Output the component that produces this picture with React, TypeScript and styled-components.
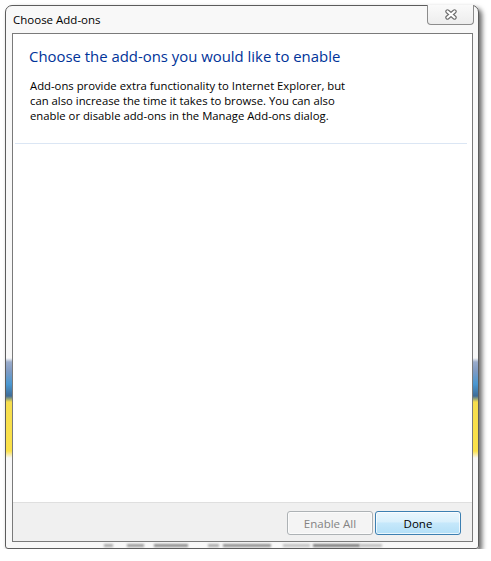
import React from 'react';
import styled, { createGlobalStyle } from 'styled-components';

const GlobalStyle = createGlobalStyle`
  html, body {
    margin: 0;
    padding: 0;
    background: #ffffff;
  }
  body {
    font-family: 'Open Sans', 'Noto Sans', 'Liberation Sans', sans-serif;
    color: #000;
  }
`;

type Smudge = { left: number; width: number; shade: string };

// blurred desktop showing through the glass frame below the panel
const smudges: Smudge[] = [
  { left: 92, width: 9, shade: '#a8a8a8' },
  { left: 14, width: 17, shade: '#9a9a9a' },
  { left: 10, width: 34, shade: '#8c8c8c' },
  { left: 20, width: 11, shade: '#a8a8a8' },
  { left: 4, width: 48, shade: '#8f8f8f' },
  { left: 12, width: 27, shade: '#c0c0c0' },
  { left: 3, width: 47, shade: '#7a7a7a' },
  { left: 0, width: 22, shade: '#bdbdbd' },
];

const App = () => {
  return (
    <>
      <GlobalStyle />
      <Page>
        <Window>
          <TitleBar>
            <Title>Choose Add-ons</Title>
            <CloseBtn>
              <svg width="14" height="11" viewBox="0 0 14 11">
                <path d="M3.5 2.5 L10.5 8.5 M10.5 2.5 L3.5 8.5" stroke="#6e6e6e" strokeWidth="4.4" strokeLinecap="round" />
                <path d="M3.5 2.5 L10.5 8.5 M10.5 2.5 L3.5 8.5" stroke="#ffffff" strokeWidth="2.2" strokeLinecap="round" />
              </svg>
            </CloseBtn>
          </TitleBar>
          <Panel>
            <Heading>Choose the add-ons you would like to enable</Heading>
            <Description>
              Add-ons provide extra functionality to Internet Explorer, but<br />
              can also increase the time it takes to browse. You can also<br />
              enable or disable add-ons in the Manage Add-ons dialog.
            </Description>
            <Separator />
            <ListArea />
            <Footer>
              <Button disabled>Enable All</Button>
              <Button $primary>Done</Button>
            </Footer>
          </Panel>
          <BottomFrame>
            {smudges.map((s, i) => (
              <Smear key={i} style={{ marginLeft: s.left, width: s.width, background: s.shade }} />
            ))}
          </BottomFrame>
        </Window>
      </Page>
    </>
  );
};

export default App;

const Page = styled.div`
  padding: 5px 0 0 5px;
`;

const Window = styled.div`
  box-sizing: border-box;
  width: 474px;
  height: 544px;
  display: flex;
  flex-direction: column;
  padding: 0 5px 0 6px;
  border: 1px solid #5c5c5c;
  border-radius: 7px 7px 3px 3px;
  box-shadow: 3px 3px 5px rgba(0, 0, 0, 0.6);
  background: linear-gradient(
    to bottom,
    #f8f8f8 0px,
    #f8f8f8 352px,
    #9aaccb 356px,
    #7f9bc4 365px,
    #4a98d2 378px,
    #3f6c98 390px,
    #f6de4e 396px,
    #fbe148 445px,
    #f8f8f8 452px,
    #f8f8f8 100%
  );
`;

const TitleBar = styled.div`
  height: 27px;
  display: flex;
  align-items: flex-start;
  justify-content: space-between;
`;

const Title = styled.span`
  margin: 6px 0 0 1px;
  font-size: 11.5px;
  line-height: 16px;
  color: #000;
`;

const CloseBtn = styled.div`
  box-sizing: border-box;
  width: 47px;
  height: 20px;
  margin: -1px -1px 0 0;
  display: flex;
  align-items: center;
  justify-content: center;
  border: 1px solid #8c8c8c;
  border-top: none;
  border-radius: 0 0 4px 4px;
  background: linear-gradient(to bottom, #fafafa, #ededed);
`;

const Panel = styled.div`
  flex: 1;
  display: flex;
  flex-direction: column;
  border: 1px solid #7a7a7a;
  background: #ffffff;
`;

const Heading = styled.h1`
  margin: 12px 0 0 16px;
  font-size: 14.9px;
  font-weight: 400;
  line-height: 21px;
  color: #003399;
`;

const Description = styled.p`
  margin: 11px 0 0 17px;
  font-size: 11.3px;
  line-height: 15px;
  color: #000;
`;

const Separator = styled.div`
  height: 1px;
  margin: 20px 5px 0 2px;
  background: #dbe6f4;
`;

const ListArea = styled.div`
  flex: 1;
`;

const Footer = styled.div`
  height: 39px;
  display: flex;
  justify-content: flex-end;
  align-items: flex-start;
  gap: 2px;
  padding: 8px 11px 0 0;
  box-sizing: border-box;
  border-top: 1px solid #dfdfdf;
  background: #f0f0f0;
`;

const Button = styled.button<{ $primary?: boolean }>`
  box-sizing: border-box;
  width: 86px;
  height: 24px;
  padding: 0;
  font-family: inherit;
  font-size: 11.5px;
  border-radius: 3px;
  border: 1px solid ${(p) => (p.$primary ? '#3c7fb1' : '#adb2b5')};
  color: ${(p) => (p.$primary ? '#000' : '#838383')};
  background: ${(p) =>
    p.$primary
      ? 'linear-gradient(to bottom, #eaf6fd 0%, #d9f0fc 45%, #c6e8fb 50%, #b3dff7 100%)'
      : '#f4f4f4'};
  box-shadow: inset 0 0 0 1px ${(p) => (p.$primary ? 'rgba(255,255,255,0.7)' : 'rgba(255,255,255,0.6)')};
`;

const BottomFrame = styled.div`
  height: 6px;
  display: flex;
  align-items: center;
  overflow: hidden;
`;

const Smear = styled.span`
  display: block;
  height: 3px;
  flex-shrink: 0;
  filter: blur(1px);
`;
